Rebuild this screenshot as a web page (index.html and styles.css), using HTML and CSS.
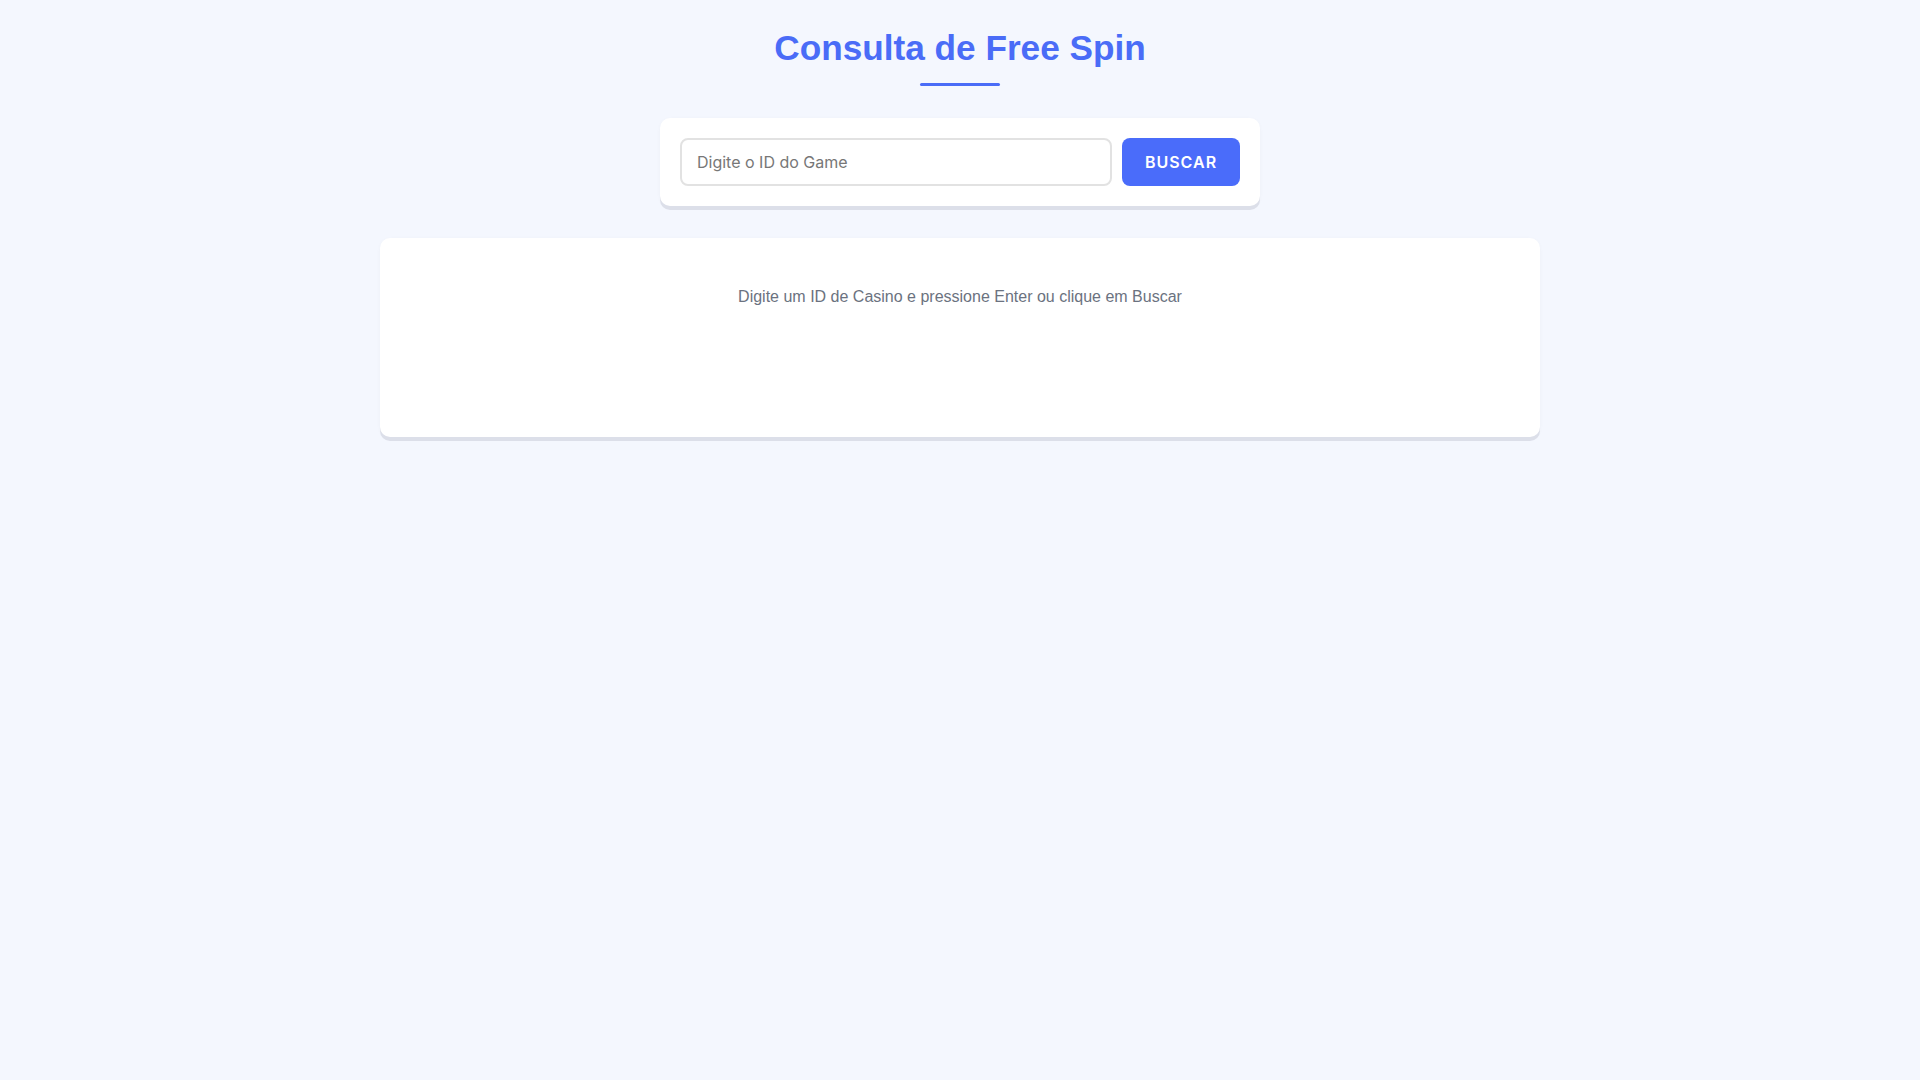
FILE: index.html
```html
<!DOCTYPE html>
<html lang="pt-BR">
<head>
<meta charset="utf-8">
<title>Consulta de Free Spin</title>
<link rel="stylesheet" href="styles.css">
</head>
<body>
<main class="page">
  <header class="header">
    <h1 class="title">Consulta de Free Spin</h1>
    <div class="title-bar"></div>
  </header>
  <section class="search-card">
    <input class="search-input" type="text" placeholder="Digite o ID do Game">
    <button class="search-btn" type="button">BUSCAR</button>
  </section>
  <section class="results-card">
    <p class="hint">Digite um ID de Casino e pressione Enter ou clique em Buscar</p>
  </section>
</main>
</body>
</html>
```
FILE: styles.css
```css
* { box-sizing: border-box; }
html, body { margin: 0; padding: 0; }
body {
  background: #f4f7fe;
  font-family: "Liberation Sans", Arial, sans-serif;
  min-height: 100vh;
}
.page {
  display: flex;
  flex-direction: column;
  align-items: center;
  padding-top: 28px;
}
.header {
  display: flex;
  flex-direction: column;
  align-items: center;
}
.title {
  margin: 0;
  font-size: 35.2px;
  font-weight: 700;
  line-height: 40px;
  color: #4a6cf7;
}
.title-bar {
  width: 80px;
  height: 3px;
  border-radius: 2px;
  background: #4a6cf7;
  margin-top: 15px;
}
.search-card {
  margin-top: 32px;
  width: 600px;
  background: #fff;
  border-radius: 10px;
  padding: 20px;
  display: flex;
  gap: 10px;
  box-shadow: 0 4px 0 #dcdfe9, 0 1px 4px rgba(0,0,0,0.03);
}
.search-input {
  flex: 1;
  height: 48px;
  border: 2px solid #e2e2e2;
  border-radius: 8px;
  padding: 0 15px;
  font-family: Inter, "Liberation Sans", sans-serif;
  font-size: 16px;
  color: #333;
  outline: none;
}
.search-input::placeholder { color: #777; }
.search-btn {
  width: 118px;
  height: 48px;
  border: none;
  border-radius: 8px;
  background: #4a6cfa;
  color: #fff;
  font-family: Inter, "Liberation Sans", sans-serif;
  font-size: 16px;
  font-weight: 600;
  letter-spacing: 1px;
  cursor: pointer;
}
.results-card {
  margin-top: 32px;
  width: 1160px;
  min-height: 199px;
  background: #fff;
  border-radius: 10px;
  padding: 30px;
  box-shadow: 0 4px 0 #dcdfe9, 0 1px 4px rgba(0,0,0,0.03);
}
.hint {
  margin: 20px 0 16px;
  text-align: center;
  font-size: 16px;
  color: #6b7280;
}
```
